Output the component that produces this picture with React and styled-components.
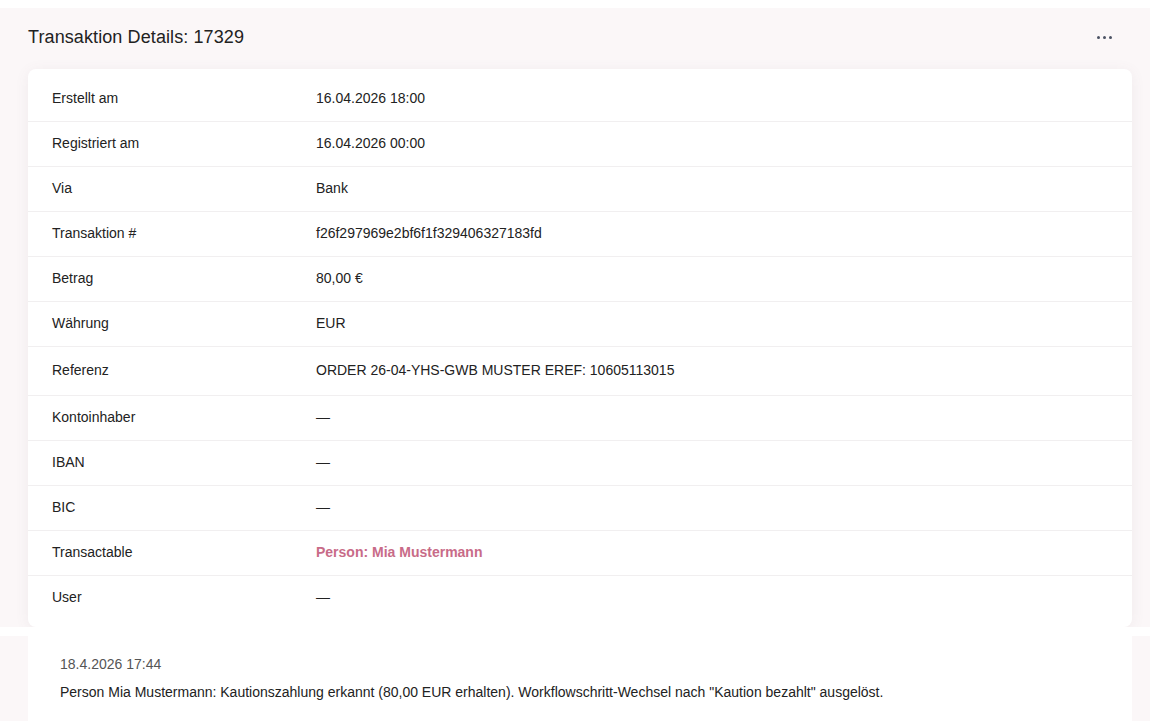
import React from "react"
import styled, { createGlobalStyle } from "styled-components"

const GlobalStyle = createGlobalStyle`
  html, body {
    margin: 0;
    padding: 0;
    background: #ffffff;
    font-family: "Liberation Sans", Arial, sans-serif;
    color: #222222;
  }
  body {
    padding-top: 8px;
  }
  *, *::before, *::after {
    box-sizing: border-box;
  }
`

const rows = [
  { label: "Erstellt am", value: "16.04.2026 18:00" },
  { label: "Registriert am", value: "16.04.2026 00:00" },
  { label: "Via", value: "Bank" },
  { label: "Transaktion #", value: "f26f297969e2bf6f1f329406327183fd" },
  { label: "Betrag", value: "80,00 €" },
  { label: "Währung", value: "EUR" },
  { label: "Referenz", value: "ORDER 26-04-YHS-GWB MUSTER EREF: 10605113015", tall: true },
  { label: "Kontoinhaber", value: "—" },
  { label: "IBAN", value: "—" },
  { label: "BIC", value: "—" },
  { label: "Transactable", value: "Person: Mia Mustermann", link: true },
  { label: "User", value: "—" },
]

const App = () => (
  <>
    <GlobalStyle />
    <Panel>
      <Header>
        <Title>Transaktion Details: 17329</Title>
        <MoreButton aria-label="Mehr">
          <Dot />
          <Dot />
          <Dot />
        </MoreButton>
      </Header>
      <Card>
        {rows.map(row => (
          <Row key={row.label} $tall={row.tall}>
            <Label>{row.label}</Label>
            {row.link ? <LinkValue href="#">{row.value}</LinkValue> : <Value>{row.value}</Value>}
          </Row>
        ))}
      </Card>
    </Panel>
    <LogPanel>
      <LogCard>
        <LogDate>18.4.2026 17:44</LogDate>
        <LogText>
          Person Mia Mustermann: Kautionszahlung erkannt (80,00 EUR erhalten). Workflowschritt-Wechsel nach "Kaution bezahlt" ausgelöst.
        </LogText>
      </LogCard>
    </LogPanel>
  </>
)

export default App

const Panel = styled.section`
  background: #fbf7f8;
  padding: 0 18px 0 28px;
  height: 619px;
  overflow: hidden;
  display: flex;
  flex-direction: column;
`

const Header = styled.div`
  flex: 0 0 61px;
  display: flex;
  align-items: center;
  justify-content: space-between;
  padding-right: 18px;
  padding-bottom: 3px;
`

const Title = styled.h2`
  margin: 0;
  font-size: 18px;
  font-weight: 400;
  color: #222222;
  letter-spacing: 0.1px;
`

const MoreButton = styled.button`
  display: flex;
  gap: 3px;
  align-items: center;
  background: none;
  border: 0;
  padding: 4px 2px;
  margin-top: 1px;
  cursor: pointer;
`

const Dot = styled.span`
  width: 3px;
  height: 3px;
  border-radius: 50%;
  background: #4b5263;
`

const Card = styled.div`
  flex: 0 0 auto;
  background: #ffffff;
  border-radius: 8px;
  box-shadow: 0 2px 14px rgba(120, 90, 100, 0.08);
  padding: 7px 0;
  width: 1104px;
`

const Row = styled.div`
  display: grid;
  grid-template-columns: 264px 1fr;
  align-items: center;
  height: ${props => (props.$tall ? "49px" : "45px")};
  padding: 0 24px 2px;
  font-size: 14px;
  & + & {
    border-top: 1px solid #f1eff0;
  }
`

const Label = styled.div`
  color: #222222;
`

const Value = styled.div`
  color: #222222;
`

const LinkValue = styled.a`
  color: #c86b88;
  font-weight: 700;
  text-decoration: none;
  justify-self: start;
`

const LogPanel = styled.section`
  margin-top: 9px;
  background: #fbf7f8;
  padding: 0 18px 0 28px;
`

const LogCard = styled.div`
  background: #ffffff;
  width: 1104px;
  padding: 20px 32px 24px;
  font-size: 14px;
`

const LogDate = styled.div`
  color: #555555;
  margin-bottom: 12px;
`

const LogText = styled.div`
  color: #222222;
`
